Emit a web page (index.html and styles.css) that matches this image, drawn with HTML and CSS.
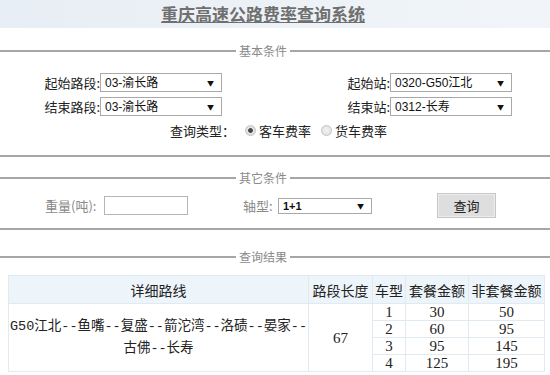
FILE: index.html
```html
<!DOCTYPE html>
<html lang="zh-CN">

<head>
    <meta charset="UTF-8">
    <title>重庆高速公路费率查询系统</title>
    <link rel="stylesheet" href="styles.css">
</head>

<body>
    <div class="titleBar">
        <h1 class="title">重庆高速公路费率查询系统</h1>
    </div>

    <fieldset class="box boxBasic">
        <legend>基本条件</legend>
        <div class="row">
            <label class="lbl lblLeft">起始路段:</label>
            <span class="sel selWide"><select><option>03-渝长路</option></select></span>
            <label class="lbl lblRight">起始站:</label>
            <span class="sel selWide"><select><option>0320-G50江北</option></select></span>
        </div>
        <div class="row">
            <label class="lbl lblLeft">结束路段:</label>
            <span class="sel selWide"><select><option>03-渝长路</option></select></span>
            <label class="lbl lblRight">结束站:</label>
            <span class="sel selWide"><select><option>0312-长寿</option></select></span>
        </div>
        <div class="row rowType">
            <span class="typeLabel">查询类型：</span>
            <label class="radio"><input type="radio" name="type" checked>客车费率</label>
            <label class="radio"><input type="radio" name="type">货车费率</label>
        </div>
    </fieldset>

    <fieldset class="box boxOther">
        <legend>其它条件</legend>
        <div class="row rowOther">
            <label class="muted weightLabel">重量(吨):</label>
            <input type="text" class="weightInput">
            <label class="muted axleLabel">轴型:</label>
            <span class="sel selAxle"><select><option>1+1</option></select></span>
            <button class="queryButton">查询</button>
        </div>
    </fieldset>

    <fieldset class="box boxResult">
        <legend>查询结果</legend>
        <table class="result">
            <thead>
                <tr>
                    <th class="colRoute">详细路线</th>
                    <th class="colLen">路段长度</th>
                    <th class="colType">车型</th>
                    <th class="colFee">套餐金额</th>
                    <th class="colFee2">非套餐金额</th>
                </tr>
            </thead>
            <tbody>
                <tr>
                    <td rowspan="4" class="route">G50江北--鱼嘴--复盛--箭沱湾--洛碛--晏家--<br>古佛--长寿</td>
                    <td rowspan="4">67</td>
                    <td>1</td>
                    <td>30</td>
                    <td>50</td>
                </tr>
                <tr>
                    <td>2</td>
                    <td>60</td>
                    <td>95</td>
                </tr>
                <tr>
                    <td>3</td>
                    <td>95</td>
                    <td>145</td>
                </tr>
                <tr>
                    <td>4</td>
                    <td>125</td>
                    <td>195</td>
                </tr>
            </tbody>
        </table>
    </fieldset>
</body>

</html>
```

FILE: styles.css
```css
body {
    margin: 0;
    background-color: white;
    font-family: "Noto Sans CJK SC", sans-serif;
    font-size: 13px;
    color: #333;
}

.titleBar {
    height: 28px;
    background: linear-gradient(to right, #e8eef5, #f1f5f9);
    padding-right: 24px;
    display: flex;
    justify-content: center;
    align-items: center;
}

.title {
    margin: 0;
    font-size: 17px;
    font-weight: bold;
    letter-spacing: 0;
    color: #6f6f6f;
    text-decoration: underline;
    line-height: 20px;
}

.box {
    margin: 0;
    border: none;
    border-top: 2px solid #a6a6a6;
    border-bottom: 2px solid #a6a6a6;
    padding: 0;
    min-width: 0;
}

.box legend {
    margin-left: 236px;
    padding: 0 3px;
    font-size: 12px;
    line-height: 16px;
    color: #8a8a8a;
}

.boxBasic {
    margin-top: 15px;
    padding: 14px 0 15px;
}

.boxOther {
    margin-top: 13px;
    padding: 7px 0 10px;
}

.boxResult {
    margin-top: 19px;
    padding: 10px 0 0;
    border-bottom: none;
}

.row {
    display: flex;
    align-items: center;
    height: 19px;
    margin-bottom: 5px;
}

.lbl {
    text-align: right;
    color: #222;
    white-space: nowrap;
}

.lblLeft {
    width: 100px;
}

.lblRight {
    width: 168px;
}

.sel {
    position: relative;
    display: inline-block;
}

.sel select {
    appearance: none;
    -webkit-appearance: none;
    display: block;
    width: 100%;
    height: 100%;
    margin: 0;
    padding: 0 0 0 4px;
    border: 1px solid #a9a9a9;
    border-radius: 0;
    background: white;
    font-family: "Liberation Sans", "Noto Sans CJK SC", sans-serif;
    font-size: 12px;
    color: #111;
}

.sel::after {
    content: "▼";
    position: absolute;
    right: 8px;
    top: 50%;
    transform: translateY(-50%);
    font-size: 7px;
    color: #111;
    pointer-events: none;
}

.selWide {
    width: 122px;
    height: 19px;
}

.rowType {
    margin-top: 4px;
    margin-bottom: 0;
}

.typeLabel {
    margin-left: 170px;
    width: 75px;
    color: #222;
}

.radio {
    display: flex;
    align-items: center;
    color: #222;
    margin-right: 10px;
}

.radio input {
    appearance: none;
    -webkit-appearance: none;
    width: 11px;
    height: 11px;
    margin: 0 3px 0 0;
    border: 1px solid #c4c4c4;
    border-radius: 50%;
    background: radial-gradient(circle, #f4f4f4 0, #dcdcdc 100%);
}

.radio input:checked {
    background: radial-gradient(circle, #4a4a4a 0 2px, #e6e6e6 2.8px, #d2d2d2 100%);
}

.rowOther {
    height: 25px;
    margin-bottom: 0;
}

.muted {
    color: #8a8a8a;
    white-space: nowrap;
}

.weightLabel {
    margin-left: 45px;
    width: 59px;
}

.weightInput {
    width: 84px;
    height: 19px;
    box-sizing: border-box;
    margin: 0;
    border: 1px solid #b5b5b5;
    padding: 0 3px;
}

.axleLabel {
    margin-left: 55px;
    width: 35px;
}

.selAxle {
    width: 94px;
    height: 16px;
}

.selAxle select {
    font-weight: bold;
    font-size: 11px;
}

.queryButton {
    margin-left: 65px;
    width: 59px;
    height: 25px;
    border: 1px solid #c6c6c6;
    background-color: #dedede;
    box-shadow: inset 0 0 0 1px #ececec;
    font-family: "Noto Sans CJK SC", sans-serif;
    font-size: 13px;
    color: #222;
    padding: 0;
}

.result {
    margin-left: 8px;
    width: 537px;
    border-collapse: collapse;
    font-family: "Liberation Serif", "Noto Sans CJK SC", serif;
    font-size: 15px;
    color: #222;
    text-align: center;
}

.result th,
.result td {
    border: 1px solid #dfeaf2;
    padding: 0;
}

.result th {
    height: 27px;
    background-color: #edf5fb;
    font-family: "Noto Sans CJK SC", sans-serif;
    font-size: 14px;
    font-weight: normal;
    white-space: nowrap;
}

.result td {
    height: 16px;
    line-height: 16px;
}

.colRoute {
    width: 299px;
}

.colLen {
    width: 63px;
}

.colType {
    width: 32px;
}

.colFee {
    width: 62px;
}

.result .route {
    font-family: "Liberation Mono", "Noto Sans CJK SC", monospace;
    font-size: 13.5px;
    line-height: 22px;
    white-space: nowrap;
}
```
